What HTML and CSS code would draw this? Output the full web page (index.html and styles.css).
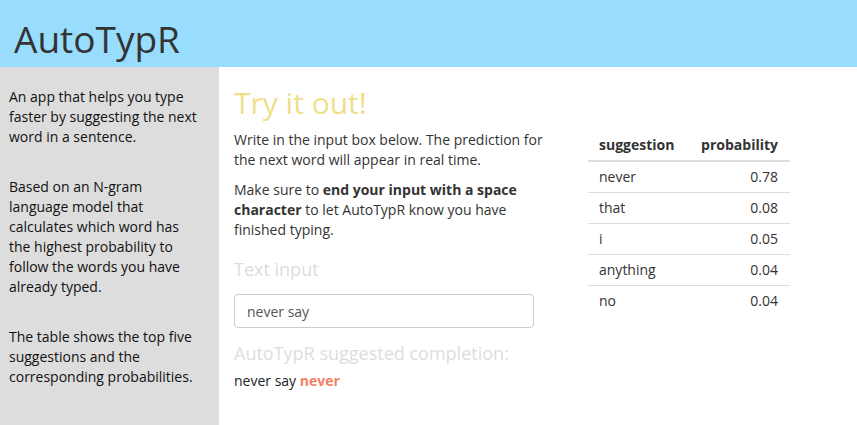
FILE: index.html
```html
<!DOCTYPE html>
<html>
<head>
<meta charset="utf-8">
<link rel="stylesheet" href="styles.css">
</head>
<body>
<header class="topbar"><h1 class="title">AutoTypR</h1></header>
<div class="layout">
  <aside class="sidebar">
    <p>An app that helps you type faster by suggesting the next word in a sentence.</p>
    <p>Based on an N-gram language model that calculates which word has the highest probability to follow the words you have already typed.</p>
    <p>The table shows the top five suggestions and the corresponding probabilities.</p>
  </aside>
  <main class="main">
    <section class="try">
      <h2 class="try-title">Try it out!</h2>
      <p class="para">Write in the input box below. The prediction for the next word will appear in real time.</p>
      <p class="para">Make sure to <b>end your input with a space character</b> to let AutoTypR know you have finished typing.</p>
      <label class="sub-label" for="txt">Text input</label>
      <input id="txt" class="text-input" type="text" value="never say">
      <h3 class="sub-label completion-label">AutoTypR suggested completion:</h3>
      <div class="completion">never say <span class="hl">never</span></div>
    </section>
    <table class="sugg">
      <thead><tr><th class="left">suggestion</th><th class="right">probability</th></tr></thead>
      <tbody>
        <tr><td class="left">never</td><td class="right">0.78</td></tr>
        <tr><td class="left">that</td><td class="right">0.08</td></tr>
        <tr><td class="left">i</td><td class="right">0.05</td></tr>
        <tr><td class="left">anything</td><td class="right">0.04</td></tr>
        <tr><td class="left">no</td><td class="right">0.04</td></tr>
      </tbody>
    </table>
  </main>
</div>
</body>
</html>
```
FILE: styles.css
```css
html, body {
  margin: 0;
  padding: 0;
  height: 100%;
}
body {
  font-family: "Open Sans", "Noto Sans", sans-serif;
  font-size: 14px;
  line-height: 20px;
  color: #333;
  background: #fff;
  display: flex;
  flex-direction: column;
  overflow: hidden;
}
.topbar {
  background: #98dcfe;
  height: 67px;
  padding: 0 14px;
  box-sizing: border-box;
  flex: none;
}
.title {
  margin: 0;
  padding-top: 13px;
  font-size: 37px;
  font-weight: 400;
  line-height: normal;
  color: #333;
}
.layout {
  flex: 1;
  display: flex;
}
.sidebar {
  width: 219px;
  flex: none;
  background: #dddddd;
  padding: 20px 16px 0 9px;
  box-sizing: border-box;
  color: #111;
}
.sidebar p {
  margin: 0 0 30px 0;
}
.main {
  flex: 1;
  display: flex;
  align-items: flex-start;
  padding: 19px 0 0 15px;
  gap: 34px;
}
.try {
  width: 320px;
}
.try-title {
  margin: 0 0 11px 0;
  font-size: 30px;
  line-height: 33px;
  font-weight: 400;
  color: #f0df8a;
}
.para {
  margin: 0 0 10px 0;
}
.para b {
  font-weight: 700;
}
.sub-label {
  display: block;
  margin: 19px 0 15px 0;
  font-size: 18px;
  line-height: 20px;
  font-weight: 500;
  color: #dddddd;
}
.text-input {
  display: block;
  width: 300px;
  height: 34px;
  box-sizing: border-box;
  border: 1px solid #cccccc;
  border-radius: 4px;
  padding: 0 12px;
  font-family: inherit;
  font-size: 14px;
  color: #555;
  background: #fff;
  outline: none;
}
.completion-label {
  margin: 15px 0 8px 0;
}
.completion {
  color: #222;
}
.hl {
  color: #f4805f;
  font-weight: 700;
}
.sugg {
  margin-top: 44px;
  width: 202px;
  border-collapse: collapse;
}
.sugg th {
  font-weight: 700;
  padding: 5px 12px 5px 11px;
  border-bottom: 2px solid #dddddd;
  white-space: nowrap;
}
.sugg td {
  padding: 5px 12px 5px 11px;
  border-top: 1px solid #dddddd;
}
.sugg tbody tr:first-child td {
  border-top: none;
}
.left { text-align: left; }
.right { text-align: right; }
```
